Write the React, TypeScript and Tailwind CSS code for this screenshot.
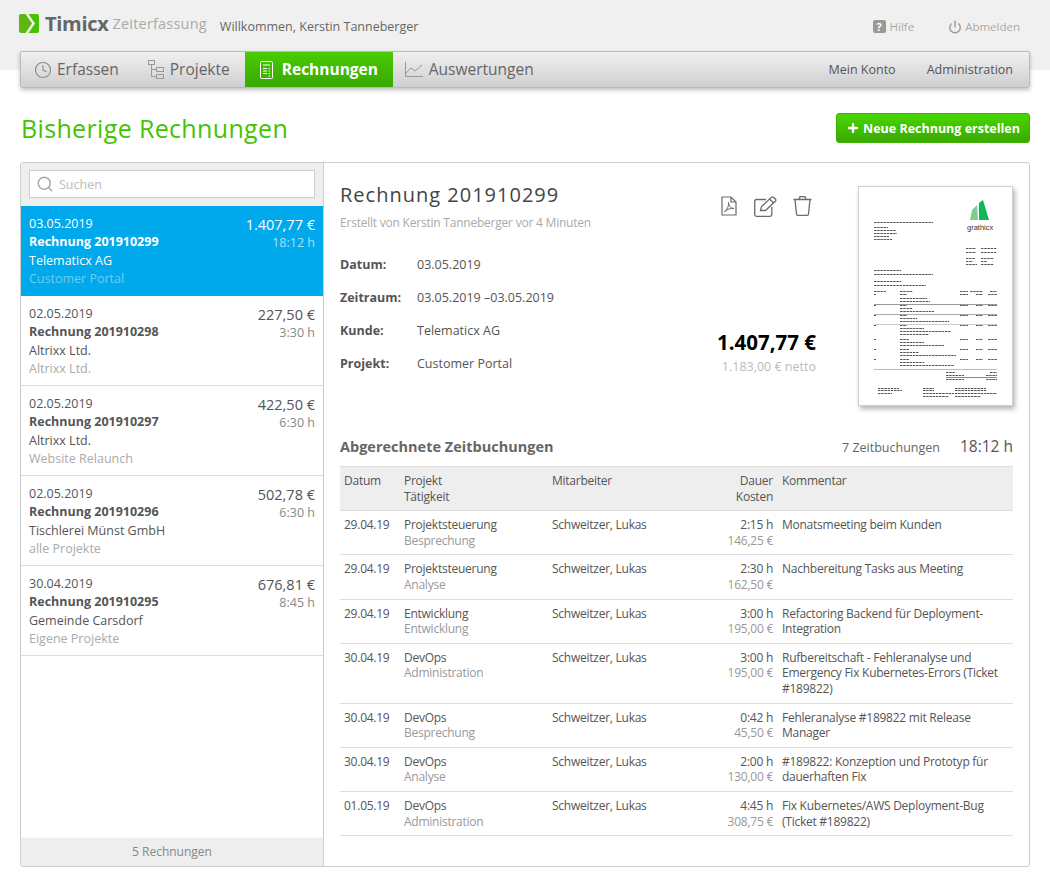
import React from "react";
import { Clock, Search, Power, Plus } from "lucide-react";

const invoices = [
  { date: "03.05.2019", no: "Rechnung 201910299", client: "Telematicx AG", project: "Customer Portal", sum: "1.407,77 €", time: "18:12 h", active: true },
  { date: "02.05.2019", no: "Rechnung 201910298", client: "Altrixx Ltd.", project: "Altrixx Ltd.", sum: "227,50 €", time: "3:30 h" },
  { date: "02.05.2019", no: "Rechnung 201910297", client: "Altrixx Ltd.", project: "Website Relaunch", sum: "422,50 €", time: "6:30 h" },
  { date: "02.05.2019", no: "Rechnung 201910296", client: "Tischlerei Münst GmbH", project: "alle Projekte", sum: "502,78 €", time: "6:30 h" },
  { date: "30.04.2019", no: "Rechnung 201910295", client: "Gemeinde Carsdorf", project: "Eigene Projekte", sum: "676,81 €", time: "8:45 h" },
];

const bookings = [
  ["29.04.19", "Projektsteuerung", "Besprechung", "2:15 h", "146,25 €", "Monatsmeeting beim Kunden"],
  ["29.04.19", "Projektsteuerung", "Analyse", "2:30 h", "162,50 €", "Nachbereitung Tasks aus Meeting"],
  ["29.04.19", "Entwicklung", "Entwicklung", "3:00 h", "195,00 €", "Refactoring Backend für Deployment-Integration"],
  ["30.04.19", "DevOps", "Administration", "3:00 h", "195,00 €", "Rufbereitschaft - Fehleranalyse und Emergency Fix Kubernetes-Errors (Ticket #189822)"],
  ["30.04.19", "DevOps", "Besprechung", "0:42 h", "45,50 €", "Fehleranalyse #189822 mit Release Manager"],
  ["30.04.19", "DevOps", "Analyse", "2:00 h", "130,00 €", "#189822: Konzeption und Prototyp für dauerhaften Fix"],
  ["01.05.19", "DevOps", "Administration", "4:45 h", "308,75 €", "Fix Kubernetes/AWS Deployment-Bug (Ticket #189822)"],
];

const details = [
  ["Datum:", "03.05.2019"],
  ["Zeitraum:", "03.05.2019 –03.05.2019"],
  ["Kunde:", "Telematicx AG"],
  ["Projekt:", "Customer Portal"],
];

// tiny text lines of the invoice thumbnail: x1, y, x2
const docLines = [
  [15, 35, 74], [15, 40, 29], [15, 43, 37], [15, 46, 38], [15, 49, 30], [15, 52, 33],
  [107, 61, 117], [122, 61, 138], [107, 65, 117], [122, 65, 138], [107, 71, 116], [122, 71, 135], [107, 74, 114], [122, 74, 128], [107, 77, 118], [122, 77, 135],
  [15, 83, 42], [15, 87, 74], [15, 94, 42], [15, 98, 67],
  [15, 104, 27], [41, 104, 54], [101, 104, 109], [111, 104, 124], [131, 104, 138],
  [15, 107, 17], [41, 107, 48], [101, 107, 109], [117, 107, 124], [129, 107, 138], [41, 111, 68], [41, 114, 71],
  [15, 118, 17], [41, 118, 48], [101, 118, 109], [117, 118, 124], [129, 118, 138], [41, 121, 53], [41, 124, 75],
  [15, 128, 17], [41, 128, 48], [101, 128, 109], [117, 128, 124], [129, 128, 138], [41, 131, 58], [41, 134, 90],
  [15, 138, 17], [41, 138, 48], [101, 138, 109], [117, 138, 124], [129, 138, 138], [41, 141, 65], [41, 144, 92], [41, 147, 70],
  [15, 152, 17], [41, 152, 50], [101, 152, 109], [117, 152, 124], [129, 152, 138], [41, 155, 65], [41, 158, 85],
  [15, 162, 17], [41, 162, 50], [101, 162, 109], [117, 162, 124], [129, 162, 138], [41, 165, 60], [41, 168, 97],
  [15, 172, 17], [41, 172, 50], [101, 172, 109], [117, 172, 124], [129, 172, 138], [41, 175, 65], [41, 178, 95],
  [87, 185, 96], [131, 185, 138], [87, 188, 105], [127, 188, 138], [87, 192, 105], [127, 192, 138],
  [19, 201, 40], [64, 201, 75], [96, 201, 127], [19, 203, 43], [64, 203, 75], [96, 203, 128], [19, 206, 33], [64, 206, 95], [96, 206, 138], [64, 209, 90], [96, 209, 122],
];

function InvoicePreview() {
  return (
    <div className="mt-[3px] w-[155px] h-[220px] bg-white border border-[#cfcfcf] shadow-[2px_3px_5px_rgba(0,0,0,0.3)] shrink-0">
      <svg width="153" height="218" viewBox="0 0 153 218">
        <path d="M113 23 L118 18 L119 33 L111 33 Z" fill="#7ccf93" />
        <path d="M120 16 L124 13 L130 33 L120 33 Z" fill="#0cb954" />
        <text x="108" y="43" fontSize="7.5" fill="#333" fontFamily="'Liberation Sans', sans-serif">grathicx</text>
        {docLines.map(([x1, y, x2], i) => (
          <line key={i} x1={x1} x2={x2} y1={y + 0.5} y2={y + 0.5} stroke="#555" strokeWidth="1" strokeDasharray="2.5 0.7" />
        ))}
        <rect x="15" y="117" width="123" height="1" fill="#999" />
        <rect x="15" y="127" width="123" height="1" fill="#aaa" />
        <rect x="15" y="137" width="123" height="1" fill="#ccc" />
        <rect x="15" y="182" width="123" height="1" fill="#bbb" />
        <rect x="87" y="190" width="51" height="1" fill="#888" />
      </svg>
    </div>
  );
}

function Logo() {
  return (
    <svg width="20" height="19" viewBox="0 0 20 19" className="shrink-0">
      <path d="M2 0 H6.5 L13 9.5 L6.5 19 H2 Q0 19 0 17 V2 Q0 0 2 0 Z" fill="#5cb80e" />
      <path d="M9.5 0 H18 Q20 0 20 2 V17 Q20 19 18 19 H9.5 L16 9.5 Z" fill="#44c400" />
    </svg>
  );
}

function TreeIcon() {
  return (
    <svg width="16" height="20" viewBox="0 0 16 20" fill="none" stroke="#999" strokeWidth="1">
      <rect x="0.5" y="0.5" width="6" height="4" />
      <rect x="8.5" y="7.5" width="7" height="4" />
      <rect x="8.5" y="14.5" width="7" height="4" />
      <path d="M3.5 4.5 V16.5 H8.5 M3.5 9.5 H8.5" />
    </svg>
  );
}

function BillIcon() {
  return (
    <svg width="13" height="18" viewBox="0 0 13 18" fill="none" stroke="#fff" strokeWidth="1">
      <rect x="0.5" y="0.5" width="12" height="17" rx="1" />
      <path d="M3 4 H10 M3 7.5 H7 M8.5 7.5 H10 M3 10 H7 M8.5 10 H10 M3 12.5 H7 M8.5 12.5 H10 M8.5 15 H10" />
    </svg>
  );
}

function ChartIcon() {
  return (
    <svg width="18" height="15" viewBox="0 0 18 15" fill="none" stroke="#999" strokeWidth="1">
      <path d="M0.5 0 V14.5 H18" />
      <path d="M1 11 L6 6 L10 9 L17 3" />
    </svg>
  );
}

function PdfIcon() {
  return (
    <svg width="16" height="20" viewBox="0 0 16 20" fill="none" stroke="#6b6b6b" strokeWidth="1.2">
      <path d="M1 1 H10 L15 6 V19 H1 Z M10 1 V6 H15" />
      <path d="M3.5 16 C6 14 8 10 7.5 6.5 C8 10 10 12.5 13 12.5 C10 12 6 13 3.5 16 Z" strokeWidth="1" />
    </svg>
  );
}

function EditIcon() {
  return (
    <svg width="23" height="21" viewBox="0 0 23 21" fill="none" stroke="#6b6b6b" strokeWidth="1.3">
      <path d="M12 3.5 H2.5 Q0.7 3.5 0.7 5.3 V18.5 Q0.7 20.3 2.5 20.3 H16 Q17.8 20.3 17.8 18.5 V11" />
      <path d="M6.5 14.5 L7.5 10.5 L17.5 1.2 Q18.5 0.5 19.5 1.2 L21.5 3.2 Q22.2 4.2 21.5 5 L11.5 14.5 Z M15.5 3 L20 7.2" />
    </svg>
  );
}

function TrashIcon() {
  return (
    <svg width="19" height="20" viewBox="0 0 19 20" fill="none" stroke="#6b6b6b" strokeWidth="1.3">
      <path d="M0.5 3.5 H18.5 M6 3.5 L7 0.7 H12 L13 3.5" />
      <path d="M2 3.5 L3.5 18 Q3.6 19.3 5 19.3 H14 Q15.4 19.3 15.5 18 L17 3.5" />
    </svg>
  );
}

export default function App() {
  return (
    <div className="relative w-[1050px] h-[874px] bg-white text-[12.5px] leading-[15px] text-[#555] font-['Open_Sans','Noto_Sans',sans-serif] overflow-hidden">
      <div className="bg-[#f0f0f0] h-[70px]">
        {/* top bar */}
        <div className="flex items-center h-[47px] pl-[19px] pr-[30px]">
          <Logo />
          <span className="ml-[6px] text-[20px] font-bold text-[#666] tracking-[-0.3px]">Timicx</span>
          <span className="ml-[4px] text-[14.5px] text-[#aaa] tracking-[0.2px]">Zeiterfassung</span>
          <span className="ml-[13px] mt-[6px] text-[12.5px] text-[#666]">Willkommen, Kerstin Tanneberger</span>
          <div className="ml-auto mt-[6px] flex items-center text-[11.5px] text-[#aaa]">
            <span className="w-[13px] h-[13px] rounded-[2px] bg-[#999] text-white text-[11px] font-bold leading-[13px] text-center mr-[4px]">?</span>
            Hilfe
            <Power size={14} strokeWidth={2.4} className="ml-[34px] mr-[3px] text-[#999]" />
            Abmelden
          </div>
        </div>
      </div>

      <div className="absolute left-5 top-[51px] w-[1010px] h-[37px] flex items-stretch border border-[#bbb] rounded-[2px] bg-gradient-to-b from-[#f0f0f0] to-[#cfcfcf] shadow-[0_2px_4px_rgba(0,0,0,0.25)] text-[15.5px] text-[#666]">
        <div className="flex items-center gap-[5px] pl-[13px] pr-[14px]">
          <Clock size={18} strokeWidth={1.5} className="text-[#888]" />
          Erfassen
        </div>
        <div className="flex items-center gap-[6px] pl-[15px] pr-[15px]">
          <TreeIcon />
          Projekte
        </div>
        <div className="flex items-center gap-[9px] w-[148px] pl-[15px] bg-gradient-to-b from-[#48cc00] to-[#39a800] text-white font-bold">
          <BillIcon />
          Rechnungen
        </div>
        <div className="flex items-center gap-[6px] pl-[12px]">
          <ChartIcon />
          Auswertungen
        </div>
        <div className="ml-auto flex items-center text-[12.5px] pr-4 gap-[31px] text-[#555]">
          <span>Mein Konto</span>
          <span>Administration</span>
        </div>
      </div>

      <div className="px-5">
        <div className="flex items-center justify-between mt-[43px] h-[30px]">
          <h1 className="pl-px text-[25px] leading-[28px] -mt-px text-[#44c400] tracking-[0.35px]">Bisherige Rechnungen</h1>
          <button className="flex items-center justify-center gap-[3px] w-[194px] h-[30px] rounded-[3px] border border-[#3fb000] bg-gradient-to-b from-[#48d800] to-[#3aa800] text-white font-bold text-[12.5px]">
            <Plus size={14} strokeWidth={4} />
            Neue Rechnung erstellen
          </button>
        </div>

        <div className="mt-[19px] h-[705px] flex border border-[#ccc] rounded-[3px]">
          {/* invoice list */}
          <div className="w-[303px] shrink-0 border-r border-[#ccc] flex flex-col">
            <div className="bg-[#eee] h-[43px] flex items-start pt-[7px] px-2">
              <div className="w-full h-[28px] bg-white border border-[#ccc] flex items-center pl-[6px] text-[#bbb] text-[12.5px]">
                <Search size={18} strokeWidth={2} className="text-[#aaa] mr-[5px]" />
                Suchen
              </div>
            </div>
            <div className="flex-1">
              {invoices.map((inv) => (
                <div
                  key={inv.no}
                  className={
                    inv.active
                      ? "flex justify-between h-[90px] px-2 pt-[9px] bg-[#00a8ec] text-white"
                      : "flex justify-between h-[90px] px-2 pt-[9px] border-b border-[#ddd]"
                  }
                >
                  <div className="leading-[18.4px]">
                    <div>{inv.date}</div>
                    <div className="font-bold">{inv.no}</div>
                    <div>{inv.client}</div>
                    <div className={inv.active ? "text-[#6fcdf4]" : "text-[#aaa]"}>{inv.project}</div>
                  </div>
                  <div className="text-right">
                    <div className="text-[14.5px] leading-[20px]">{inv.sum}</div>
                    <div className={inv.active ? "text-[#a8e0f8] leading-[15px]" : "text-[#888] leading-[15px]"}>{inv.time}</div>
                  </div>
                </div>
              ))}
            </div>
            <div className="bg-[#eee] h-[28px] pb-[2px] flex items-center justify-center text-[12px] text-[#888]">5 Rechnungen</div>
          </div>

          {/* invoice detail */}
          <div className="flex-1 pl-4 pr-4 pt-[20px]">
            <div className="flex h-[246px]">
              <div className="w-[300px]">
                <h2 className="text-[20px] leading-[24px] tracking-[1px] text-[#444] font-medium">Rechnung 201910299</h2>
                <div className="mt-[9px] text-[12px] leading-[14.4px] tracking-[-0.22px] text-[#aaa]">Erstellt von Kerstin Tanneberger vor 4 Minuten</div>
                <div className="mt-[27px] flex flex-col gap-[18px]">
                  {details.map(([label, value]) => (
                    <div key={label} className="flex">
                      <span className="w-[77px] font-bold">{label}</span>
                      <span>{value}</span>
                    </div>
                  ))}
                </div>
              </div>
              <div className="w-[176px] flex flex-col">
                <div className="flex items-start pl-[81px] mt-[13px] h-[23px]">
                  <PdfIcon />
                  <span className="ml-[17px]"><EditIcon /></span>
                  <span className="ml-[16px]"><TrashIcon /></span>
                </div>
                <div className="mt-[111px] text-right text-[20.5px] font-bold leading-[24px] text-black">1.407,77 €</div>
                <div className="mt-[5px] text-right text-[#bbb]">1.183,00 € netto</div>
              </div>
              <div className="ml-auto">
                <InvoicePreview />
              </div>
            </div>

            <div className="flex items-baseline h-[37px] pt-[10px]">
              <h3 className="text-[14.5px] font-bold text-[#666]">Abgerechnete Zeitbuchungen</h3>
              <span className="ml-auto text-[#666]">7 Zeitbuchungen</span>
              <span className="ml-5 text-[15.5px] text-[#555]">18:12 h</span>
            </div>

            <table className="w-[673px] table-fixed border-collapse text-[12px] leading-[15.6px] tracking-[-0.25px]">
              <colgroup>
                <col className="w-[64px]" />
                <col className="w-[148px]" />
                <col className="w-[141px]" />
                <col className="w-[80px]" />
                <col />
              </colgroup>
              <thead>
                <tr className="bg-[#eee] border-y border-[#ddd] text-left align-top">
                  <th className="font-normal pl-1 pt-[6px] pb-[6px]">Datum</th>
                  <th className="font-normal pt-[6px] pb-[6px]">Projekt<br />Tätigkeit</th>
                  <th className="font-normal pt-[6px]">Mitarbeiter</th>
                  <th className="font-normal pt-[6px] text-right">Dauer<br />Kosten</th>
                  <th className="font-normal pl-[9px] pt-[6px]">Kommentar</th>
                </tr>
              </thead>
              <tbody>
                {bookings.map((b, i) => (
                  <tr key={i} className="border-b border-[#ddd] align-top">
                    <td className="pl-1 pt-[6px] pb-[6px]">{b[0]}</td>
                    <td className="pt-[6px] pb-[6px]">
                      {b[1]}
                      <div className="text-[#999]">{b[2]}</div>
                    </td>
                    <td className="pt-[6px] pb-[6px]">Schweitzer, Lukas</td>
                    <td className="pt-[6px] pb-[6px] text-right">
                      {b[3]}
                      <div className="text-[#999]">{b[4]}</div>
                    </td>
                    <td className="pl-[9px] pt-[6px] pb-[6px]">{b[5]}</td>
                  </tr>
                ))}
              </tbody>
            </table>
          </div>
        </div>
      </div>
    </div>
  );
}
